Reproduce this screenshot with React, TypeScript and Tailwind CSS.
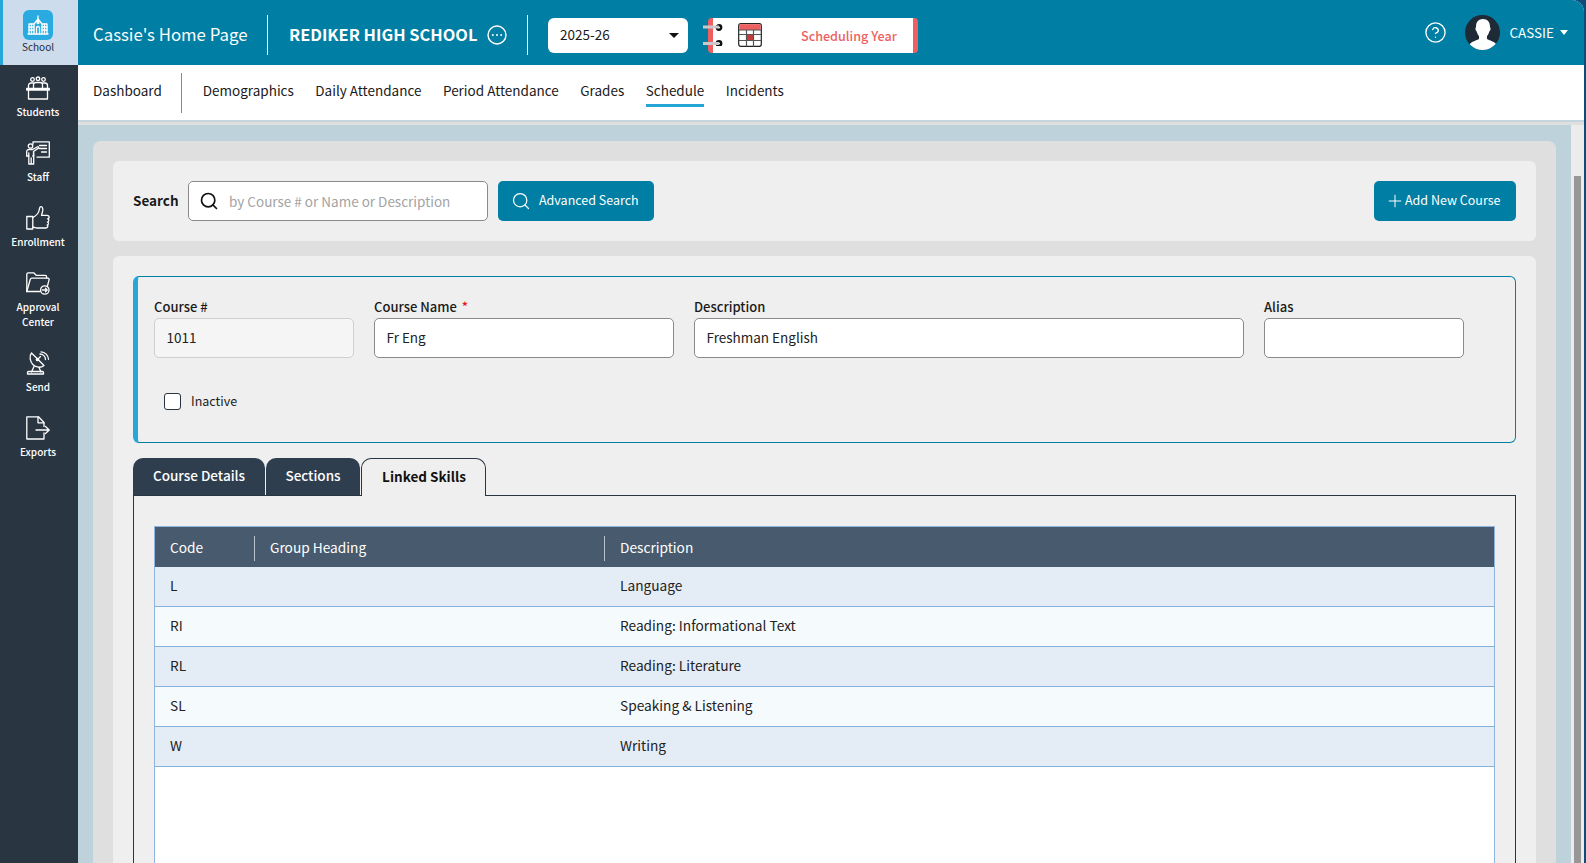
import React from "react";
import { Search, Plus, HelpCircle } from "lucide-react";

const font = { fontFamily: '"Noto Sans CJK SC", "Noto Sans", sans-serif' };

const S = ({ children, w, h, vb }: { children: React.ReactNode; w: number; h: number; vb: string }) => (
  <svg width={w} height={h} viewBox={vb} fill="none" stroke="currentColor" strokeWidth="1.3" strokeLinejoin="round" strokeLinecap="round">
    {children}
  </svg>
);

const SchoolIcon = () => (
  <S w={22} h={20} vb="0 0 22 20">
    <path d="M1 19h20M2 19V9h5v10M15 19V9h5v10M7 9l4-5 4 5M7 19V9M15 19V9" />
    <path d="M9.5 19v-6a1.5 1.5 0 0 1 3 0v6" />
    <circle cx="11" cy="7.5" r="1" />
    <path d="M11 4V1M2 12h5M2 15h5M15 12h5M15 15h5M4.5 9v10M17.5 9v10" />
  </S>
);
const StudentsIcon = () => (
  <S w={24} h={24} vb="0 0 24 24">
    <circle cx="6.5" cy="3.5" r="1.8" />
    <circle cx="12" cy="2.8" r="1.8" />
    <circle cx="17.5" cy="3.5" r="1.8" />
    <path d="M2.5 12V9.5a2.5 2.5 0 0 1 2.5-2.5h3M21.5 12V9.5A2.5 2.5 0 0 0 19 7h-3M7.5 12V9.5A2.5 2.5 0 0 1 10 6.5h4a2.5 2.5 0 0 1 2.5 3V12" />
    <path d="M0.7 12.5h22.6v1.5H0.7zM2.5 14v9h19v-9" />
  </S>
);
const StaffIcon = () => (
  <S w={24} h={24} vb="0 0 24 24">
    <path d="M7 3V0.800h16.300v15.400H11" />
    <path d="M13.500 4.500h7M13.500 7.500h7M15.500 11h5" />
    <circle cx="4.500" cy="5" r="2.200" />
    <path d="M0.700 15V10.500a2 2 0 0 1 2-2h3.800l5.500-3 0.800 1.400-5.300 3.600V15" />
    <path d="M2.800 12v11h4.900V12M5.200 17v6" />
    <path d="M0.700 15h2.100M7.700 15h-1" />
  </S>
);
const ThumbIcon = () => (
  <S w={24} h={24} vb="0 0 24 24">
    <path d="M0.8 10.5h6V23h-6z" />
    <path d="M6.8 11.5c3-1.5 6-4.5 6.5-8 .2-1.500 .8-2.800 1.800-2.800 1.600 0 1.900 2.400 1.600 4.200-.3 1.500-.8 3-1.200 4.400h5.600c1.600 0 2.200 1.200 2 2.200-.2.9-.8 1.300-1.500 1.400.9.2 1.300.9 1.200 1.800-.1.8-.7 1.300-1.400 1.400.8.2 1.200.9 1 1.800-.2.7-.7 1.100-1.300 1.200.6.3.9.9.7 1.600-.2.9-.9 1.300-1.800 1.300H11c-1.600 0-2.600-.6-4.200-1" />
  </S>
);
const FolderIcon = () => (
  <S w={24} h={23} vb="0 0 24 23">
    <path d="M0.8 19.5V2.2a1.4 1.4 0 0 1 1.4-1.400h5.500l2.500 2.500h9a1.400 1.400 0 0 1 1.400 1.400V6" />
    <path d="M0.8 19.500 4.200 7.500a1.800 1.800 0 0 1 1.700-1.300h16a1.200 1.200 0 0 1 1.200 1.500l-1.800 7" />
    <path d="M0.8 19.500h13.500" />
    <circle cx="18.800" cy="18" r="4.200" />
    <path d="M16.500 18h4.500M19.500 16.200l1.700 1.800-1.700 1.800" />
  </S>
);
const SendIcon = () => (
  <S w={24} h={24} vb="0 0 24 24">
    <path d="M5.500 2 18 14.500c-3 2.500-8 2.300-11-.7S3 5 5.500 2z" />
    <circle cx="11.500" cy="8.500" r="1.200" />
    <path d="M11.500 8.500l3-3" />
    <path d="M14 3a5.500 5.500 0 0 1 5.500 5.500M15 0.800a8 8 0 0 1 7.500 7.500" />
    <path d="M8 15.500 5.500 21M13 16.500l2 4.500" />
    <path d="M1.500 23h16v-1.500a1 1 0 0 0-1-1h-14a1 1 0 0 0-1 1z" />
  </S>
);
const ExportIcon = () => (
  <S w={24} h={24} vb="0 0 24 24">
    <path d="M18 10.500V6.500L12.500 0.800H0.800V23H18v-6" />
    <path d="M12 0.800v6h6" />
    <path d="M10 14h13M19.500 10.500 23.200 14l-3.700 3.500" />
  </S>
);

const navItems = [
  { label: "Students", icon: <StudentsIcon /> },
  { label: "Staff", icon: <StaffIcon /> },
  { label: "Enrollment", icon: <ThumbIcon /> },
  { label: "Approval Center", icon: <FolderIcon /> },
  { label: "Send", icon: <SendIcon /> },
  { label: "Exports", icon: <ExportIcon /> },
];

const Sidebar = () => (
  <aside className="w-[78px] shrink-0 bg-[#2a3542] flex flex-col text-white">
    <div className="h-[65px] bg-[#cddcec] border-l-[3px] border-[#26a6d9] flex flex-col items-center pt-[10px] pr-[5px]">
      <div className="w-[30px] h-[30px] rounded-md bg-[#29abe2] flex items-center justify-center">
        <SchoolIcon />
      </div>
      <span className="text-[10px] leading-[14px] mt-0 text-[#1d2a3a]">School</span>
    </div>
    <div className="flex flex-col pt-[11px] pr-[2px]">
      {navItems.map((n) => (
        <div key={n.label} className="pb-[22px] flex flex-col items-center text-center">
          <div className="h-[24px] flex items-center justify-center">{n.icon}</div>
          <span className="text-[10px] leading-[15px] mt-[4px] w-[60px] font-medium">{n.label}</span>
        </div>
      ))}
    </div>
  </aside>
);

const CalendarIcon = () => (
  <svg width="24" height="24" viewBox="0 0 24 24">
    <rect x="0.7" y="0.7" width="22.600" height="22.600" rx="2" fill="#fff" stroke="#222" strokeWidth="1.200" />
    <path d="M1.300 7V2.500a1.300 1.300 0 0 1 1.300-1.300h18.800a1.300 1.300 0 0 1 1.300 1.300V7z" fill="#ef5f5f" />
    <rect x="8.500" y="11.500" width="7" height="6" fill="#c43c3c" />
    <path d="M1 7h22M1 11.500h22M1 17.500h22M8.500 7v16.500M15.500 7v16.500" stroke="#555" strokeWidth="1.200" fill="none" />
  </svg>
);

const Header = () => (
  <header className="h-[65px] shrink-0 bg-[#007ea3] text-white flex items-center rounded-tr-xl pl-[15px] pr-[16px] pt-[5px]">
    <span className="text-[16.8px] w-[174px] whitespace-nowrap -mt-[1px]">Cassie's Home Page</span>
    <div className="w-px h-[40px] bg-white" />
    <span className="text-[16.4px] font-semibold ml-[21px] w-[187px] whitespace-nowrap -mt-[2px]">REDIKER HIGH SCHOOL</span>
    <svg className="ml-[11px]" width="20" height="20" viewBox="0 0 20 20" fill="none" stroke="#fff" strokeWidth="1.400">
      <circle cx="10" cy="10" r="9" />
      <circle cx="5.800" cy="10" r="1" fill="#fff" stroke="none" />
      <circle cx="10" cy="10" r="1" fill="#fff" stroke="none" />
      <circle cx="14.200" cy="10" r="1" fill="#fff" stroke="none" />
    </svg>
    <div className="w-px h-[40px] bg-white ml-[20px]" />
    <div className="ml-[20px] w-[140px] h-[35px] bg-white rounded-md text-[#1a1a1a] text-[13.5px] flex items-center justify-between pl-[12px] pr-[9px]">
      <span className="-mt-[2px]">2025-26</span>
      <div className="w-0 h-0 border-l-[5px] border-r-[5px] border-t-[5px] border-l-transparent border-r-transparent border-t-[#111]" />
    </div>
    <div className="relative ml-[20px] w-[210px] h-[35px] bg-white rounded-[4px] border-l-[5px] border-r-[5px] border-[#ef5f5f] flex items-center">
      <svg className="absolute left-[-11px] top-[6px]" width="21" height="22" viewBox="0 0 21 22">
        <circle cx="17" cy="3.500" r="2.200" fill="none" stroke="#111" strokeWidth="2.400" />
        <circle cx="17" cy="19.500" r="2.200" fill="none" stroke="#111" strokeWidth="2.400" />
        <path d="M1 3h16M1 19.500h16" stroke="#c9c9c9" strokeWidth="3" />
      </svg>
      <div className="ml-[25px]"><CalendarIcon /></div>
      <span className="ml-[39px] mt-[2px] text-[12.6px] font-medium text-[#ef5f5f] whitespace-nowrap">Scheduling Year</span>
    </div>
    <div className="ml-auto flex items-center mb-[5px]">
      <HelpCircle size={23} strokeWidth={1.400} />
      <div className="ml-[18px] w-[35px] h-[35px] rounded-full bg-[#1f2a37] overflow-hidden flex items-end justify-center">
        <svg width="28" height="32" viewBox="0 0 28 32" fill="#fff">
          <path d="M14 1c4.500 0 7 3 7 7.500 0 1.300.8 1.500.5 3-.3 1.300-1 1.500-1.300 2.500-.5 1.500-1.200 3-2.200 4v3c2 1.500 8 2.500 9 5 .5 1.500 1 3 1 6.500H0c0-3.500.5-5 1-6.500 1-2.500 7-3.500 9-5v-3c-1-1-1.700-2.500-2.200-4-.3-1-1-1.200-1.300-2.500-.3-1.500.5-1.700.5-3C7 4 9.500 1 14 1z" />
        </svg>
      </div>
      <span className="ml-[9px] text-[13.5px]">CASSIE</span>
      <div className="ml-[6px] w-0 h-0 border-l-[4.500px] border-r-[4.500px] border-t-[5px] border-l-transparent border-r-transparent border-t-white" />
    </div>
  </header>
);

const SubNav = () => (
  <nav className="h-[55px] shrink-0 bg-white flex items-center pl-[15px] text-[13.5px] text-[#1a1a1a]">
    <span className="-mt-[4px]">Dashboard</span>
    <div className="w-px h-[40px] bg-[#8a8a8a] ml-[19px] mr-[21px]" />
    <div className="flex gap-[21.5px] -mt-[4px]">
      {["Demographics", "Daily Attendance", "Period Attendance", "Grades"].map((t) => (
        <span key={t} className="whitespace-nowrap">{t}</span>
      ))}
      <span className="relative whitespace-nowrap">
        Schedule
        <span className="absolute left-0 right-0 -bottom-[6px] h-[3px] bg-[#26a5d8]" />
      </span>
      <span className="whitespace-nowrap">Incidents</span>
    </div>
  </nav>
);

const Field = ({ label, value, w, req, disabled }: { label: string; value: string; w: string; req?: boolean; disabled?: boolean }) => (
  <div className={`${w} flex flex-col`}>
    <label className="text-[13px] leading-[20px] font-medium text-[#1a1a1a] h-[20px]">
      {label}
      {req && <span className="text-[#e11] ml-[5px]">*</span>}
    </label>
    <div className={`mt-[1px] h-[40px] rounded-[5px] border flex items-center px-[11.500px] text-[13.5px] text-[#222] ${disabled ? "bg-[#f5f5f5] border-[#cfcfcf]" : "bg-white border-[#8a8a8a]"}`}>
      <span className="-mt-px">{value}</span>
    </div>
  </div>
);

const rows = [
  ["L", "Language"],
  ["RI", "Reading: Informational Text"],
  ["RL", "Reading: Literature"],
  ["SL", "Speaking & Listening"],
  ["W", "Writing"],
];

const Content = () => (
  <main className="flex-1 min-w-0 bg-[#bed2db] px-[15px] pt-[16px] overflow-hidden">
    <div className="bg-[#dfdfdf] rounded-lg p-[20px] pb-0 h-[900px]">
      <section className="h-[80px] bg-[#efefef] rounded-md flex items-center px-[20px]">
        <span className="text-[13.5px] font-semibold text-[#1a1a1a] w-[45px] -mt-[2px]">Search</span>
        <div className="ml-[10px] w-[300px] h-[40px] bg-white rounded-[5px] border border-[#8a8a8a] flex items-center pl-[10px]">
          <Search size={20} strokeWidth={2} className="text-[#111]" />
          <span className="ml-[10px] text-[13.5px] text-[#a3a3a3] mt-[1px]">by Course # or Name or Description</span>
        </div>
        <button className="ml-[10px] w-[156px] h-[40px] rounded-[5px] bg-[#007ea3] text-white flex items-center pl-[13px] text-[12.5px]">
          <Search size={20} strokeWidth={1.500} />
          <span className="ml-[8px] whitespace-nowrap -mt-[2px]">Advanced Search</span>
        </button>
        <button className="ml-auto w-[142px] h-[40px] rounded-[5px] bg-[#007ea3] text-white flex items-center pl-[11px] text-[12.5px]">
          <Plus size={20} strokeWidth={1.200} />
          <span className="whitespace-nowrap -mt-[2px]">Add New Course</span>
        </button>
      </section>
      <section className="mt-[15px] bg-[#efefef] rounded-md p-[20px] h-[800px]">
        <div className="h-[167px] rounded-md border border-[#007ea3] border-l-[5px] border-l-[#26a6d9] pl-[16px] pt-[20px]">
          <div className="flex gap-[20px]">
            <Field label="Course #" value="1011" w="w-[200px]" disabled />
            <Field label="Course Name" value="Fr Eng" w="w-[300px]" req />
            <Field label="Description" value="Freshman English" w="w-[550px]" />
            <Field label="Alias" value="" w="w-[200px]" />
          </div>
          <div className="flex items-center mt-[34px] ml-[10px]">
            <div className="w-[17px] h-[17px] rounded-[3px] border border-[#2a3542] bg-white" />
            <span className="ml-[10px] text-[12.5px] text-[#222]">Inactive</span>
          </div>
        </div>
        <div className="flex gap-px mt-[15px] relative z-10 items-start h-[37px]">
          <div className="w-[132px] h-[37px] rounded-t-[10px] bg-[#2f3e4f] text-white text-[13.5px] font-medium flex items-center justify-center pb-[2px]">Course Details</div>
          <div className="w-[94px] h-[37px] rounded-t-[10px] bg-[#2f3e4f] text-white text-[13.5px] font-medium flex items-center justify-center pb-[2px]">Sections</div>
          <div className="w-[125px] h-[38px] rounded-t-[10px] bg-[#efefef] border border-b-0 border-[#2a3542] text-[#111] text-[13.5px] font-semibold flex items-center justify-center pb-[2px] pl-[1px]">Linked Skills</div>
        </div>
        <div className="border border-[#2a3542] px-[20px] pt-[30px] h-[500px]">
          <div className="h-full bg-white border border-[#8db5e0] text-[13.7px] text-[#222]">
            <div className="h-[40px] bg-[#485b6e] text-white text-[13.7px] grid grid-cols-[100px_350px_1fr] items-center">
              <div className="pl-[15px] h-[25px] mt-[3px] flex items-center border-r border-[#b8c2cc] pb-[2px]">Code</div>
              <div className="pl-[15px] h-[25px] mt-[3px] flex items-center border-r border-[#b8c2cc] pb-[2px]">Group Heading</div>
              <div className="pl-[15px] h-[25px] mt-[3px] flex items-center pb-[2px]">Description</div>
            </div>
            {rows.map((r, i) => (
              <div key={r[0]} className={`h-[40px] border-b border-[#85b2dd] pb-[2px] grid grid-cols-[100px_350px_1fr] items-center ${i % 2 === 0 ? "bg-[#e4ecf6]" : "bg-[#f5fafd]"}`}>
                <div className="pl-[15px]">{r[0]}</div>
                <div />
                <div className="pl-[15px]">{r[1]}</div>
              </div>
            ))}
          </div>
        </div>
      </section>
    </div>
  </main>
);

export default function App() {
  return (
    <div className="h-screen w-full flex overflow-hidden bg-[#0f4c7a]" style={font}>
      <Sidebar />
      <div className="w-[1506px] shrink-0 flex flex-col h-full bg-white rounded-tr-xl">
        <Header />
        <SubNav />
        <div className="h-[5px] shrink-0 bg-[#dfdfdf] border-t-2 border-[#c5d6de]" />
        <div className="flex-1 min-h-0 flex">
          <Content />
          <div className="w-[13px] shrink-0 bg-[#ececec] pt-[51px] pl-[3px] pr-[3px]">
            <div className="h-full bg-[#979797]" />
          </div>
        </div>
      </div>
    </div>
  );
}
